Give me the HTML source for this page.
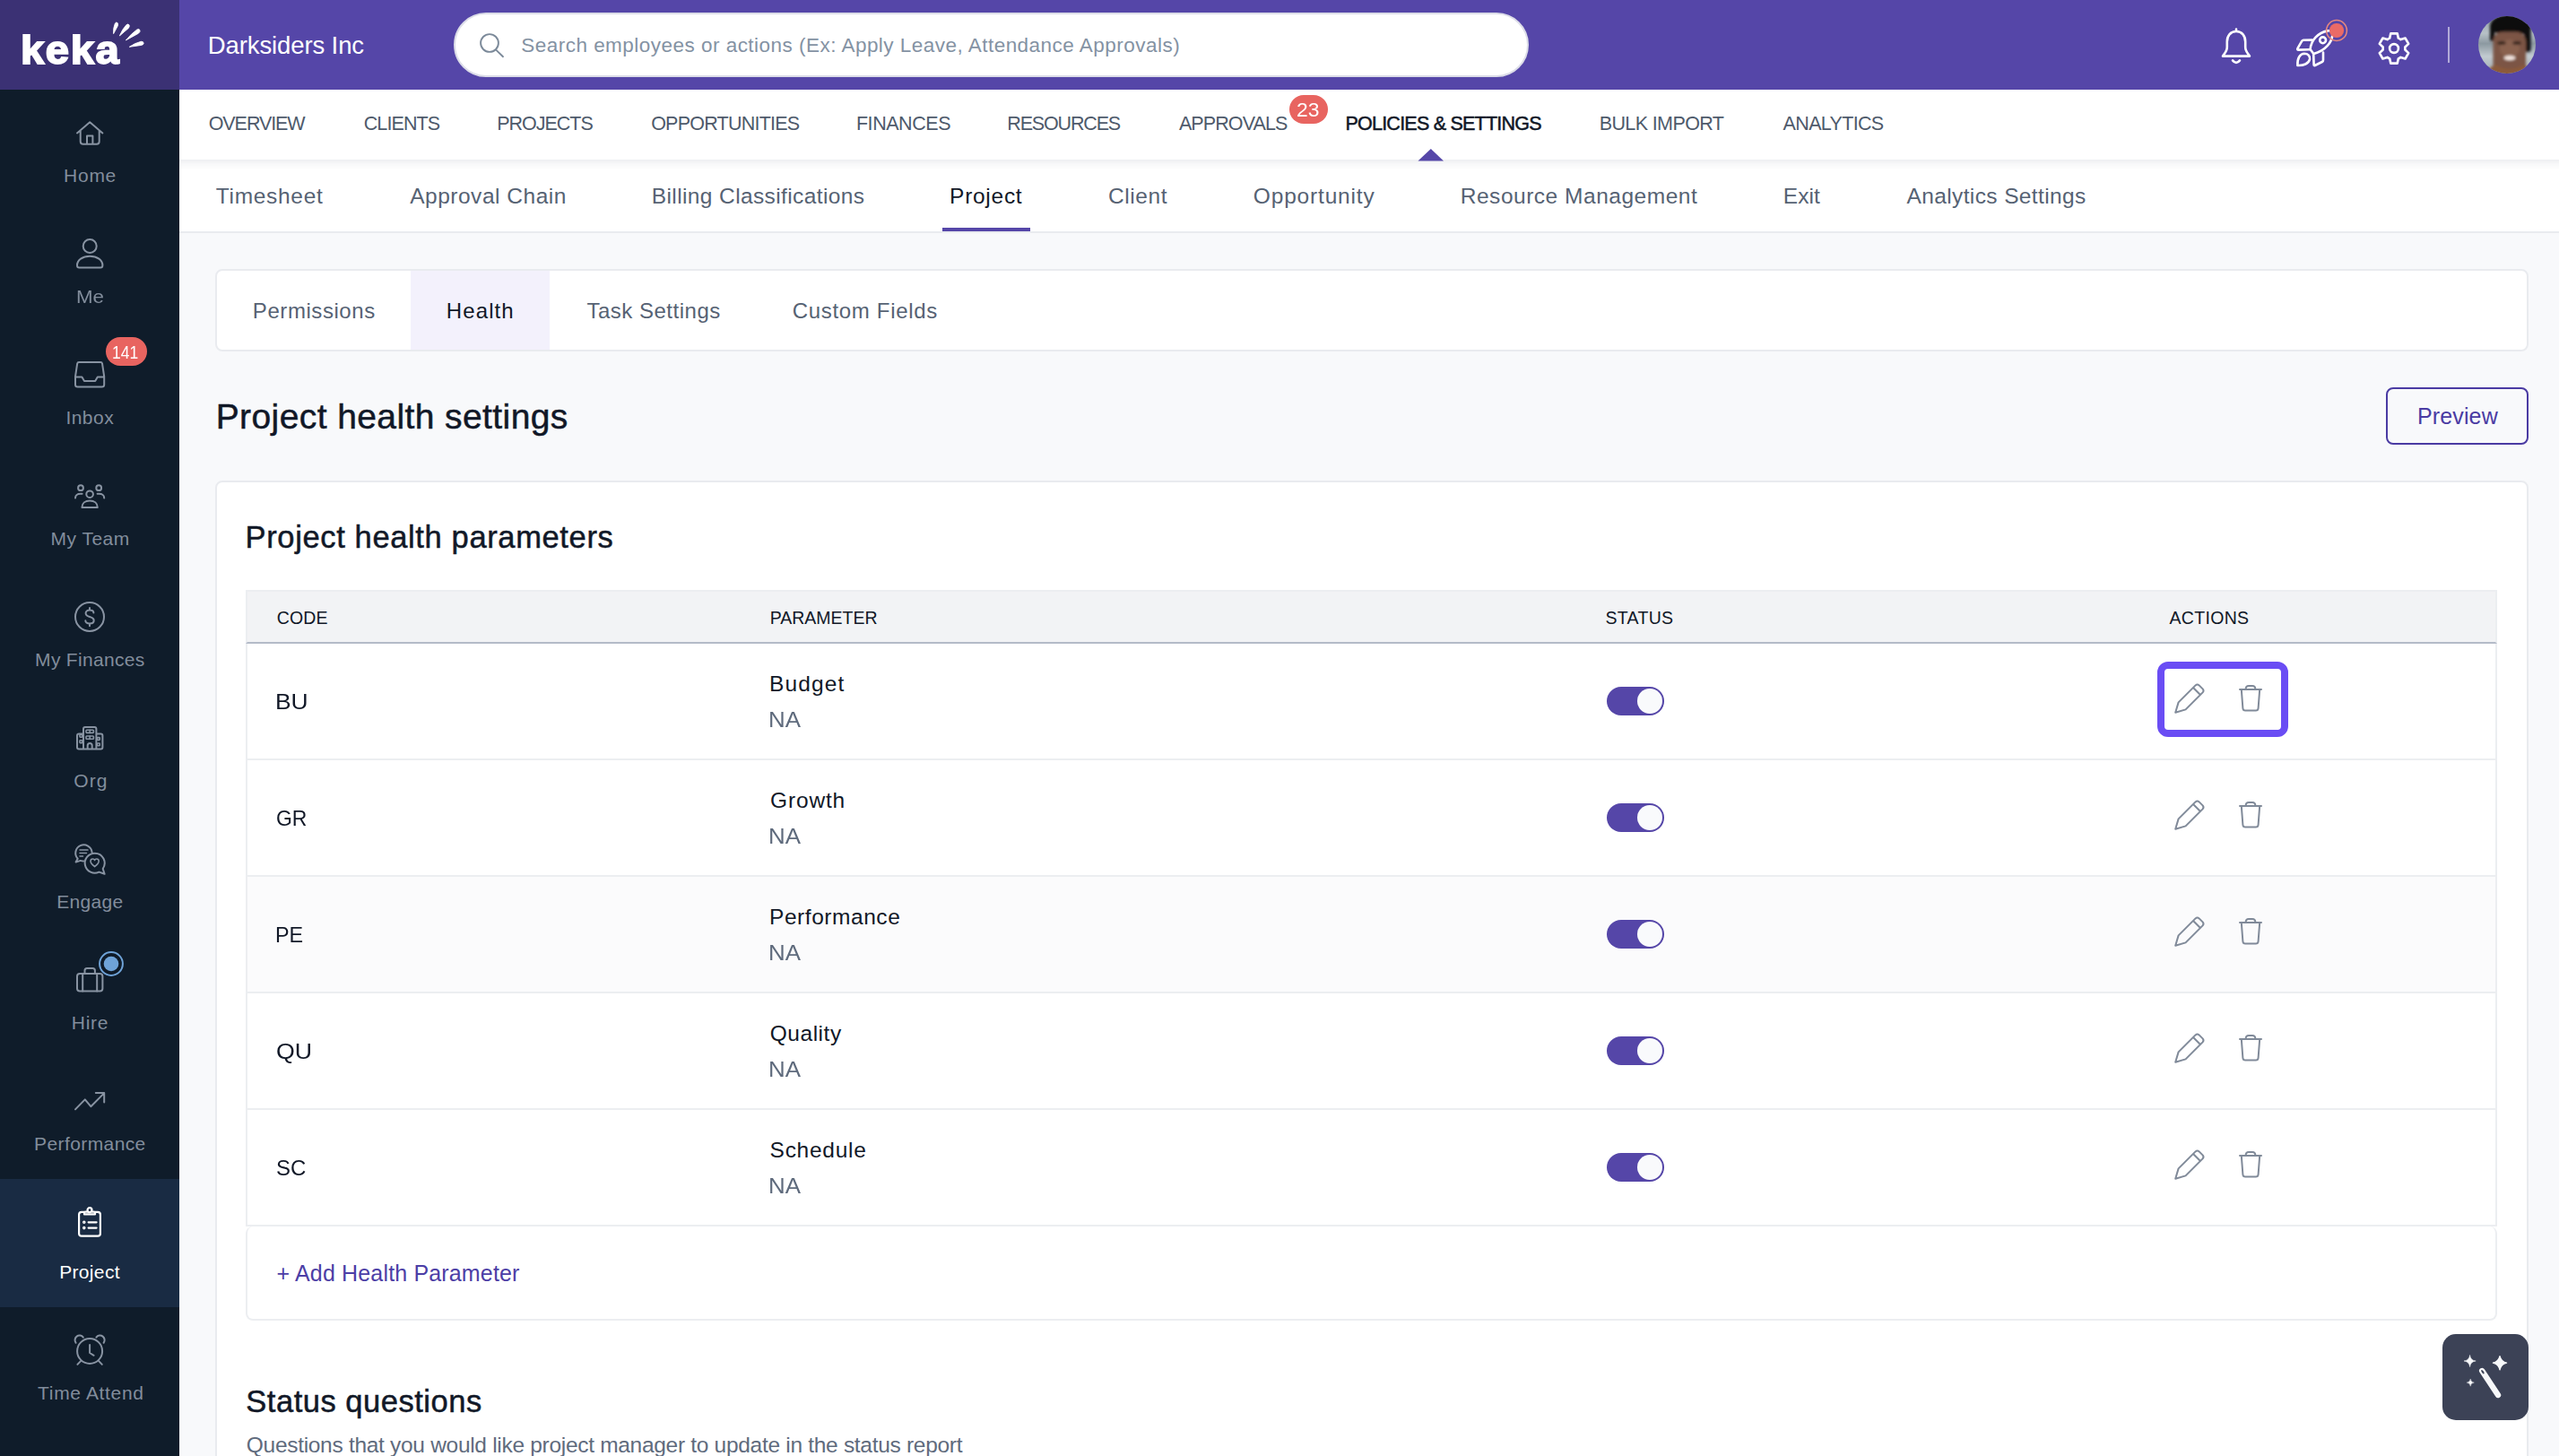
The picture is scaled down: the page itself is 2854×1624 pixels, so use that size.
<!DOCTYPE html>
<html lang="en">
<head>
<meta charset="utf-8">
<title>Keka - Project health settings</title>
<style>
*{box-sizing:border-box;margin:0;padding:0}
html,body{width:2854px;height:1624px;overflow:hidden;background:#f8f9fb;font-family:"Liberation Sans",Arial,sans-serif;color:#111827}
div,svg{position:absolute}
#txt{left:0;top:0;z-index:20}
span.t{position:absolute;white-space:nowrap;line-height:1}
#logo{left:0;top:0;width:200px;height:100px;background:#3b3174}
#topbar{left:200px;top:0;width:2654px;height:100px;background:#5546a8}
#search{left:506px;top:14px;width:1199px;height:72px;border-radius:36px;background:#fff;border:2px solid #dcdde8}
#side{left:0;top:100px;width:200px;height:1524px;background:#0f1c2a}
#sideact{left:0;top:1315px;width:200px;height:143px;background:#192b43}
svg.si{fill:none;stroke:#8893a2;stroke-width:2;stroke-linecap:round;stroke-linejoin:round;overflow:visible}
svg.tw{fill:none;stroke:#fff;stroke-width:2.6;stroke-linecap:round;stroke-linejoin:round;overflow:visible}
.badge{background:#e86460;border-radius:16px;height:32px}
#nav{left:140px;top:100px;width:2800px;height:78px;background:#fff;box-shadow:0 3px 9px rgba(40,50,80,.10);z-index:3;clip-path:inset(0 0 -30px 60px)}
#sub{left:200px;top:178px;width:2654px;height:82px;background:#fff;border-bottom:2px solid #e9ebef;z-index:2}
.card{background:#fff;border:2px solid #e9ebef;border-radius:8px}
#thead{left:274px;top:658px;width:2511px;height:60px;background:#f2f3f5;border-bottom:2px solid #b4bbc8;border-left:2px solid #eceef1;border-right:2px solid #eceef1;border-top:2px solid #eceef1}
.row{left:274px;width:2511px;height:130px;border-bottom:2px solid #eceef1;border-left:2px solid #eceef1;border-right:2px solid #eceef1;background:#fff}
.tog{left:1792px;width:64px;height:32px;border-radius:16px;background:#5546a8}
.tog i{position:absolute;right:2px;top:2px;width:28px;height:28px;border-radius:14px;background:#f9fafc}
svg.ic{fill:none;stroke:#808a99;stroke-width:2;stroke-linecap:round;stroke-linejoin:round;overflow:visible}
</style>
</head>
<body>
<!-- ===== top bar ===== -->
<div id="topbar"></div>
<div id="logo">
  <span class="t" style="left:22.8px;top:33px;font-size:45px;font-weight:bold;color:#fff;letter-spacing:1.5px;-webkit-text-stroke:1.8px #fff;paint-order:stroke fill;transform:scaleX(1.05);transform-origin:0 0">keka</span>
  <svg width="200" height="100" style="left:0;top:0" fill="#fff" stroke="#fff" stroke-width="0.9" stroke-linejoin="round">
    <path d="M126.6,37.6 Q126.2,31 128.3,26.2 Q129.6,24.2 131.1,25.6 Q131.9,27 131.2,29 Z"/>
    <path d="M133.4,39.9 Q136.5,32.5 140.9,27.8 Q142.8,26.2 144.1,27.9 Q144.7,29.6 143.3,31.4 Z"/>
    <path d="M140.4,44.9 Q146.5,37.5 152.8,33 Q155.2,31.8 156.1,33.8 Q156.4,35.8 154.4,37.2 Z"/>
    <path d="M144.3,52.3 Q151,47.8 157.4,46.3 Q159.9,46.1 160.2,48.2 Q159.9,50 157.6,50.4 Z"/>
  </svg>
</div>
<div id="search">
  <svg width="30" height="30" style="left:27px;top:20.5px" fill="none" stroke="#7b8999" stroke-width="1.9" stroke-linecap="round"><circle cx="11" cy="11" r="9.9"/><path d="M18.2,18.6 L26,26.2"/></svg>
</div>
<!-- bell -->
<svg class="tw" width="34" height="42" style="left:2477px;top:31px"><path d="M17,4 C10.5,4 6.8,9 6.8,15.5 V21.5 C6.8,26 4,28.6 2,31.6 H32 C30,28.6 27.2,26 27.2,21.5 V15.5 C27.2,9 23.5,4 17,4 Z M17,1.6 V4 M13,36.4 Q17,41.4 21,36.4"/></svg>
<!-- rocket -->
<svg class="tw" width="42" height="42" style="left:2560px;top:33px">
  <path d="M16.6,22 C17.5,12 25,3.5 36,1.4 Q41.5,0.6 41.4,6 C40.5,14 34,23.5 20.3,27 Z"/>
  <circle cx="30.6" cy="11.8" r="3.4"/>
  <path d="M18.4,11.6 L9,11.8 Q7.6,12 7,13.2 L2.4,21.2 Q1.8,22.6 3.4,22.6 L16,22.2"/>
  <path d="M31,25.6 L31,34 Q31,35.4 29.8,36 L21.8,40 Q20.6,40.4 20.6,39 L20.2,27.6"/>
  <path d="M2.4,40 C2,32 5,27 10,26.8 C14,26.8 16.6,29.6 16,33 C15,38 9,40.4 2.4,40 Z"/>
</svg>
<svg width="30" height="30" style="left:2591.1px;top:18.9px"><circle cx="15" cy="15" r="11.4" fill="none" stroke="#e8897f" stroke-width="1.5"/><circle cx="15" cy="15" r="8.1" fill="#ea6a66"/></svg>
<!-- gear -->
<svg class="tw" width="40" height="40" style="left:2650px;top:34px"><path d="M15.15,8.59 L16.32,3.40 L23.68,3.40 L24.85,8.59 A12.4,12.4 0 0 1 27.46,10.10 L32.53,8.51 L36.21,14.89 L32.31,18.49 A12.4,12.4 0 0 1 32.31,21.51 L36.21,25.11 L32.53,31.49 L27.46,29.90 A12.4,12.4 0 0 1 24.85,31.41 L23.68,36.60 L16.32,36.60 L15.15,31.41 A12.4,12.4 0 0 1 12.54,29.90 L7.47,31.49 L3.79,25.11 L7.69,21.51 A12.4,12.4 0 0 1 7.69,18.49 L3.79,14.89 L7.47,8.51 L12.54,10.10 A12.4,12.4 0 0 1 15.15,8.59 Z"/><circle cx="20" cy="20" r="4.9"/></svg>
<div style="left:2730px;top:30px;width:2px;height:40px;background:rgba(255,255,255,.55)"></div>
<!-- avatar -->
<svg width="64" height="64" viewBox="0 0 64 64" style="left:2764px;top:18px">
  <defs>
    <clipPath id="avc"><circle cx="32" cy="32" r="32"/></clipPath>
    <filter id="avb" x="-20%" y="-20%" width="140%" height="140%"><feGaussianBlur stdDeviation="1.5"/></filter>
    <linearGradient id="avg" x1="0" y1="0" x2="0" y2="1"><stop offset="0" stop-color="#97a4ac"/><stop offset=".3" stop-color="#b7c1c7"/><stop offset=".48" stop-color="#8c99a1"/><stop offset=".7" stop-color="#c2cbd0"/><stop offset="1" stop-color="#a0abb2"/></linearGradient>
  </defs>
  <g clip-path="url(#avc)">
    <rect width="64" height="64" fill="url(#avg)"/>
    <g filter="url(#avb)">
      <ellipse cx="36.5" cy="10" rx="23" ry="12.5" fill="#0c0c0f"/>
      <rect x="51" y="8" width="7.5" height="32" rx="3.5" fill="#0c0c0f"/>
      <rect x="13" y="8" width="5.5" height="20" rx="2.7" fill="#0c0c0f"/>
      <rect x="16.5" y="17.5" width="36.5" height="52" rx="11" fill="#7b5544"/>
      <ellipse cx="35" cy="36" rx="11" ry="10" fill="#8a6250"/>
      <ellipse cx="26" cy="30" rx="5" ry="1.7" fill="#2b1a14"/>
      <ellipse cx="43" cy="30" rx="5" ry="1.7" fill="#2b1a14"/>
      <ellipse cx="35" cy="46.6" rx="6.4" ry="2.7" fill="#f3e5df"/>
      <path d="M8,66 C11,57 17,54 22,55 C28,60 42,60 48,55 C53,54 58,57 60,66 Z" fill="#8b5a3a"/>
    </g>
  </g>
</svg>

<!-- ===== sidebar ===== -->
<div id="side"></div>
<div id="sideact"></div>
<!-- home -->
<svg class="si" width="31" height="27" style="left:84.9px;top:134.7px"><path d="M1,13.4 L15.2,1.2 L29.4,13.4 M4.7,10.8 V22.8 Q4.7,25.8 7.7,25.8 H22.7 Q25.7,25.8 25.7,22.8 V10.8 M12,25.8 V16.4 H18.4 V25.8"/></svg>
<!-- me -->
<svg class="si" width="31" height="34" style="left:84.9px;top:266.3px"><circle cx="15.2" cy="8.5" r="7.5"/><path d="M1,30 C1,24 7,19.8 15.2,19.8 C23.4,19.8 29.4,24 29.4,30 Q29.4,32.5 27,32.5 H3.4 Q1,32.5 1,30 Z"/></svg>
<!-- inbox -->
<svg class="si" width="35" height="30" style="left:82.9px;top:403.4px"><path d="M5,1 H29.2 Q30.7,1 31,2.4 L33.2,17 V26 Q33.2,28.6 30.6,28.6 H3.6 Q1,28.6 1,26 V17 L3.2,2.4 Q3.5,1 5,1 Z M1,17.6 H8.4 L11,22 H23.2 L25.8,17.6 H33.2"/></svg>
<div class="badge" style="left:118px;top:376px;width:46px"></div>
<!-- my team -->
<svg class="si" width="35" height="27" style="left:82.9px;top:539.6px"><circle cx="17.1" cy="11.2" r="3.8"/><path d="M8.4,26 C8.4,21.5 12,18.6 17.1,18.6 C22.2,18.6 25.8,21.5 25.8,26 Z"/><circle cx="7" cy="4.2" r="2.9"/><circle cx="27.2" cy="4.2" r="2.9"/><path d="M1,15.5 C1,12.5 3.5,10.8 6.5,10.8 H8.6 M33.2,15.5 C33.2,12.5 30.7,10.8 27.7,10.8 H25.6"/></svg>
<!-- finances -->
<svg class="si" width="34" height="34" style="left:83px;top:671px"><circle cx="17" cy="17" r="16"/><path d="M21.4,12.6 C21.4,10.6 19.5,9.6 17,9.6 C14.3,9.6 12.6,10.9 12.6,13 C12.6,15.4 14.6,16.3 17,17 C19.5,17.7 21.7,18.6 21.7,21 C21.7,23.3 19.8,24.5 17,24.5 C14.2,24.5 12.3,23.3 12.3,21.2 M17,7 V9.6 M17,24.5 V27.2"/></svg>
<!-- org -->
<svg class="si" width="31" height="27" style="left:84.9px;top:809.6px"><path d="M8,25.4 V3 Q8,1 10,1 H20.4 Q22.4,1 22.4,3 V25.4 M8,8.5 H3 Q1,8.5 1,10.5 V23.4 Q1,25.4 3,25.4 H27.4 Q29.4,25.4 29.4,23.4 V10.5 Q29.4,8.5 27.4,8.5 H22.4 M12.7,25.4 V21.5 Q12.7,19 15.2,19 Q17.7,19 17.7,21.5 V25.4"/><g stroke-width="1.6"><rect x="11" y="4.2" width="8.4" height="3.2" rx=".8"/><rect x="11" y="11" width="8.4" height="3.2" rx=".8"/><path d="M15.2,4.2 V7.4 M15.2,11 V14.2"/><rect x="4" y="9.4" width="2.8" height="2.8" rx=".6"/><rect x="4" y="15.8" width="2.8" height="2.8" rx=".6"/><rect x="23.4" y="12.6" width="2.8" height="2.8" rx=".6"/><rect x="23.4" y="19" width="2.8" height="2.8" rx=".6"/></g></svg>
<!-- engage -->
<svg class="si" width="36" height="35" style="left:82.5px;top:940.6px"><path d="M19.6,9.6 A9.2,9.2 0 1,0 3.7,16.8 L1.6,20.6 L6.8,18.9 Q8.4,19.5 10.2,19.5"/><path d="M6,7 H15 M6,10.5 H13.5 M6,14 H9.5" stroke-width="1.5"/><path d="M22.6,10.7 A11,11 0 1,0 27.5,31.6 L33.6,33.8 L31.7,28 A11,11 0 0,0 22.6,10.7 Z"/><path stroke-width="1.6" d="M22.6,25.6 C19,23 18,21 18,19.6 C18,18 19.3,17 20.5,17 C21.5,17 22.3,17.6 22.6,18.4 C22.9,17.6 23.7,17 24.7,17 C25.9,17 27.2,18 27.2,19.6 C27.2,21 26.2,23 22.6,25.6 Z"/></svg>
<!-- hire -->
<svg class="si" width="31" height="28" style="left:84.9px;top:1079px"><rect x="1" y="7" width="28.4" height="19.5" rx="3"/><path d="M9.5,7 V3.5 Q9.5,1 12,1 H18.4 Q20.9,1 20.9,3.5 V7 M7.2,7 V26.5 M23.2,7 V26.5"/></svg>
<svg width="30" height="30" style="left:108.8px;top:1059.6px"><circle cx="15" cy="15" r="12.9" fill="#0f1b29" stroke="#6fa3d8" stroke-width="2"/><circle cx="15" cy="15" r="8.3" fill="#6fa3d8"/></svg>
<!-- performance -->
<svg class="si" width="35" height="21" style="left:82.9px;top:1218px"><path d="M1,19.4 L11.8,8.4 L18.3,16.2 L32.8,1.6 M23.8,1.1 H33.2 V11.6"/></svg>
<!-- project -->
<svg class="si" width="26" height="34" style="left:87.1px;top:1346px;stroke:#fff;stroke-width:2.2"><path d="M6.5,5.8 H4 Q1.1,5.8 1.1,8.8 V29.7 Q1.1,32.7 4,32.7 H22 Q24.9,32.7 24.9,29.7 V8.8 Q24.9,5.8 22,5.8 H19.5 M7,8.4 H19 M7,8.4 V6.6 Q7,5.6 8,5.6 H10.3 M19,8.4 V6.6 Q19,5.6 18,5.6 H15.7"/><circle cx="13" cy="3.7" r="2.5"/><path d="M11.6,17.3 H20.6 M11.6,23.6 H20.6"/><circle cx="6.8" cy="17.3" r=".7"/><circle cx="6.8" cy="23.6" r=".7"/></svg>
<!-- time attend -->
<svg class="si" width="35" height="34" style="left:83px;top:1489px"><circle cx="17.1" cy="18" r="14"/><path d="M17.1,11 V20 L21.6,22.8 M1.6,8.8 A4.8,4.8 0 0 1 9.8,2.6 M24.4,2.6 A4.8,4.8 0 0 1 32.6,8.8 M7.5,28.6 L3.4,32.9 M26.7,28.6 L30.8,32.9"/></svg>

<!-- ===== nav bars ===== -->
<div id="nav"></div>
<div class="badge" style="left:1438px;top:106px;width:43px;z-index:4"></div>
<svg width="30" height="15" style="left:1581px;top:165px;z-index:5"><path d="M0.5,14.5 L14.8,1 L29,14.5 Z" fill="#5546a8"/></svg>
<div id="sub"></div>
<div style="left:1051px;top:254px;width:98px;height:4px;background:#5546a8;z-index:6"></div>

<!-- ===== content ===== -->
<div class="card" id="tabs" style="left:240px;top:300px;width:2580px;height:92px;overflow:hidden"><div style="left:216px;top:0;width:155px;height:88px;background:#f3f1fc"></div></div>
<div style="left:2661px;top:432px;width:159px;height:64px;border:2px solid #4a3ba3;border-radius:8px"></div>
<div class="card" style="left:240px;top:536px;width:2580px;height:1200px"></div>
<div id="thead"></div>
<div class="row" style="top:718px"></div>
<div class="row" style="top:848px"></div>
<div class="row" style="top:978px;background:#fbfbfc"></div>
<div class="row" style="top:1108px"></div>
<div class="row" style="top:1238px"></div>
<div style="left:274px;top:1368px;width:2511px;height:105px;border:2px solid #eceef1;border-top:none;border-radius:8px;background:#fff"></div>
<div style="left:2406px;top:738px;width:146px;height:84px;border:8px solid #6a4df4;border-radius:12px"></div>
<div class="tog" style="top:766px"><i></i></div>
<svg class="ic" width="34" height="34" style="left:2425px;top:762px"><path d="M1.2,32.8 L4.6,21.4 L23.6,2.4 Q25.6,0.6 27.6,2.4 L31.6,6.4 Q33.4,8.4 31.6,10.4 L12.6,29.4 Z M21,5 L29,13"/></svg>
<svg class="ic" width="26" height="30" style="left:2497px;top:764.2px"><path d="M1,5 H25 M7.6,5 Q7.6,1 11,1 H15 Q18.4,1 18.4,5 M2.8,5 L4.4,26 Q4.6,28.6 7.2,28.6 H18.8 Q21.4,28.6 21.6,26 L23.2,5"/></svg>
<div class="tog" style="top:896px"><i></i></div>
<svg class="ic" width="34" height="34" style="left:2425px;top:892px"><path d="M1.2,32.8 L4.6,21.4 L23.6,2.4 Q25.6,0.6 27.6,2.4 L31.6,6.4 Q33.4,8.4 31.6,10.4 L12.6,29.4 Z M21,5 L29,13"/></svg>
<svg class="ic" width="26" height="30" style="left:2497px;top:894.2px"><path d="M1,5 H25 M7.6,5 Q7.6,1 11,1 H15 Q18.4,1 18.4,5 M2.8,5 L4.4,26 Q4.6,28.6 7.2,28.6 H18.8 Q21.4,28.6 21.6,26 L23.2,5"/></svg>
<div class="tog" style="top:1026px"><i></i></div>
<svg class="ic" width="34" height="34" style="left:2425px;top:1022px"><path d="M1.2,32.8 L4.6,21.4 L23.6,2.4 Q25.6,0.6 27.6,2.4 L31.6,6.4 Q33.4,8.4 31.6,10.4 L12.6,29.4 Z M21,5 L29,13"/></svg>
<svg class="ic" width="26" height="30" style="left:2497px;top:1024.2px"><path d="M1,5 H25 M7.6,5 Q7.6,1 11,1 H15 Q18.4,1 18.4,5 M2.8,5 L4.4,26 Q4.6,28.6 7.2,28.6 H18.8 Q21.4,28.6 21.6,26 L23.2,5"/></svg>
<div class="tog" style="top:1156px"><i></i></div>
<svg class="ic" width="34" height="34" style="left:2425px;top:1152px"><path d="M1.2,32.8 L4.6,21.4 L23.6,2.4 Q25.6,0.6 27.6,2.4 L31.6,6.4 Q33.4,8.4 31.6,10.4 L12.6,29.4 Z M21,5 L29,13"/></svg>
<svg class="ic" width="26" height="30" style="left:2497px;top:1154.2px"><path d="M1,5 H25 M7.6,5 Q7.6,1 11,1 H15 Q18.4,1 18.4,5 M2.8,5 L4.4,26 Q4.6,28.6 7.2,28.6 H18.8 Q21.4,28.6 21.6,26 L23.2,5"/></svg>
<div class="tog" style="top:1286px"><i></i></div>
<svg class="ic" width="34" height="34" style="left:2425px;top:1282px"><path d="M1.2,32.8 L4.6,21.4 L23.6,2.4 Q25.6,0.6 27.6,2.4 L31.6,6.4 Q33.4,8.4 31.6,10.4 L12.6,29.4 Z M21,5 L29,13"/></svg>
<svg class="ic" width="26" height="30" style="left:2497px;top:1284.2px"><path d="M1,5 H25 M7.6,5 Q7.6,1 11,1 H15 Q18.4,1 18.4,5 M2.8,5 L4.4,26 Q4.6,28.6 7.2,28.6 H18.8 Q21.4,28.6 21.6,26 L23.2,5"/></svg>
<div style="left:2724px;top:1488px;width:96px;height:96px;border-radius:15px;background:#3c4256;z-index:30">
<svg width="96" height="96" style="left:0;top:0" fill="#f7f8fa">
<path d="M44.2,41 L62,68" stroke="#f7f8fa" stroke-width="6.4" stroke-linecap="round"/>
<ellipse cx="44.9" cy="42.2" rx="1.1" ry="2.6" transform="rotate(-33 44.9 42.2)" fill="#3c4256"/>
<path d="M30.6,23.4 Q31.3,29.3 37.2,30 Q31.3,30.7 30.6,36.6 Q29.900000000000002,30.7 24.0,30 Q29.900000000000002,29.3 30.6,23.4 Z" stroke="#f7f8fa" stroke-width="0.5"/>
<path d="M64,24.6 Q65.5,30.700000000000003 71.6,32.2 Q65.5,33.7 64,39.800000000000004 Q62.5,33.7 56.4,32.2 Q62.5,30.700000000000003 64,24.6 Z" stroke="#f7f8fa" stroke-width="1.3" stroke-linejoin="round"/>
<path d="M31.2,50.0 Q31.599999999999998,53.7 35.3,54.1 Q31.599999999999998,54.5 31.2,58.2 Q30.8,54.5 27.1,54.1 Q30.8,53.7 31.2,50.0 Z" stroke="#f7f8fa" stroke-width="0.4"/>
</svg></div>

<!-- text layer -->
<div id="txt">
<span class="t" style="left:231.78px;top:37px;font-size:27.5px;color:#ffffff;letter-spacing:-0.110px;">Darksiders Inc</span>
<span class="t" style="left:581.26px;top:40px;font-size:22.5px;color:#8492a3;letter-spacing:0.477px;">Search employees or actions (Ex: Apply Leave, Attendance Approvals)</span>
<span class="t" style="left:232.71px;top:128px;font-size:21.5px;color:#4e5a6b;letter-spacing:-1.077px;">OVERVIEW</span>
<span class="t" style="left:405.69px;top:128px;font-size:21.5px;color:#4e5a6b;letter-spacing:-0.882px;">CLIENTS</span>
<span class="t" style="left:554.27px;top:128px;font-size:21.5px;color:#4e5a6b;letter-spacing:-1.024px;">PROJECTS</span>
<span class="t" style="left:726.13px;top:128px;font-size:21.5px;color:#4e5a6b;letter-spacing:-0.762px;">OPPORTUNITIES</span>
<span class="t" style="left:954.94px;top:128px;font-size:21.5px;color:#4e5a6b;letter-spacing:-0.450px;">FINANCES</span>
<span class="t" style="left:1123.33px;top:128px;font-size:21.5px;color:#4e5a6b;letter-spacing:-1.167px;">RESOURCES</span>
<span class="t" style="left:1314.95px;top:128px;font-size:21.5px;color:#4e5a6b;letter-spacing:-0.908px;">APPROVALS</span>
<span class="t" style="left:1783.68px;top:128px;font-size:21.5px;color:#4e5a6b;letter-spacing:-0.612px;">BULK IMPORT</span>
<span class="t" style="left:1988.59px;top:128px;font-size:21.5px;color:#4e5a6b;letter-spacing:-0.660px;">ANALYTICS</span>
<span class="t" style="left:1500.46px;top:128px;font-size:21.5px;color:#111827;letter-spacing:-0.769px;-webkit-text-stroke:0.5px #111827;">POLICIES &amp; SETTINGS</span>
<span class="t" style="transform:scaleX(1.0628);transform-origin:0 0;left:1445.84px;top:113px;font-size:21.5px;color:#ffffff;letter-spacing:0.000px;">23</span>
<span class="t" style="left:240.85px;top:207px;font-size:24.5px;color:#566273;letter-spacing:0.683px;">Timesheet</span>
<span class="t" style="left:457.17px;top:207px;font-size:24.5px;color:#566273;letter-spacing:0.518px;">Approval Chain</span>
<span class="t" style="left:726.78px;top:207px;font-size:24.5px;color:#566273;letter-spacing:0.389px;">Billing Classifications</span>
<span class="t" style="left:1236.11px;top:207px;font-size:24.5px;color:#566273;letter-spacing:0.540px;">Client</span>
<span class="t" style="left:1397.82px;top:207px;font-size:24.5px;color:#566273;letter-spacing:0.826px;">Opportunity</span>
<span class="t" style="left:1628.78px;top:207px;font-size:24.5px;color:#566273;letter-spacing:0.517px;">Resource Management</span>
<span class="t" style="left:1988.78px;top:207px;font-size:24.5px;color:#566273;letter-spacing:0.045px;">Exit</span>
<span class="t" style="left:2126.42px;top:207px;font-size:24.5px;color:#566273;letter-spacing:0.388px;">Analytics Settings</span>
<span class="t" style="left:1059.07px;top:207px;font-size:24.5px;color:#111827;letter-spacing:0.726px;">Project</span>
<span class="t" style="left:281.87px;top:335px;font-size:24px;color:#566273;letter-spacing:0.559px;">Permissions</span>
<span class="t" style="left:497.79px;top:335px;font-size:24px;color:#111827;letter-spacing:1.113px;">Health</span>
<span class="t" style="left:654.47px;top:335px;font-size:24px;color:#566273;letter-spacing:0.505px;">Task Settings</span>
<span class="t" style="left:883.78px;top:335px;font-size:24px;color:#566273;letter-spacing:0.676px;">Custom Fields</span>
<span class="t" style="left:240.67px;top:445px;font-size:39px;color:#111827;letter-spacing:0.407px;-webkit-text-stroke:0.5px #111827;">Project health settings</span>
<span class="t" style="left:2695.94px;top:452px;font-size:25px;color:#4a3ba3;letter-spacing:0.143px;">Preview</span>
<span class="t" style="left:273.58px;top:582px;font-size:34.5px;color:#111827;letter-spacing:0.631px;-webkit-text-stroke:0.5px #111827;">Project health parameters</span>
<span class="t" style="left:308.71px;top:680px;font-size:19.5px;color:#111827;letter-spacing:0.123px;">CODE</span>
<span class="t" style="left:858.71px;top:680px;font-size:19.5px;color:#111827;letter-spacing:0.001px;">PARAMETER</span>
<span class="t" style="left:1790.48px;top:680px;font-size:19.5px;color:#111827;letter-spacing:0.320px;">STATUS</span>
<span class="t" style="left:2419.41px;top:680px;font-size:19.5px;color:#111827;letter-spacing:0.340px;">ACTIONS</span>
<span class="t" style="transform:scaleX(1.0777);transform-origin:0 0;left:306.74px;top:771px;font-size:24.5px;color:#111827;letter-spacing:0.000px;">BU</span>
<span class="t" style="left:858.07px;top:751px;font-size:24.5px;color:#111827;letter-spacing:1.098px;">Budget</span>
<span class="t" style="transform:scaleX(1.0553);transform-origin:0 0;left:857.19px;top:791px;font-size:24.5px;color:#5f6b7d;letter-spacing:0.000px;">NA</span>
<span class="t" style="transform:scaleX(0.9356);transform-origin:0 0;left:307.96px;top:901px;font-size:24.5px;color:#111827;letter-spacing:0.000px;">GR</span>
<span class="t" style="left:859.11px;top:881px;font-size:24.5px;color:#111827;letter-spacing:0.814px;">Growth</span>
<span class="t" style="transform:scaleX(1.0553);transform-origin:0 0;left:857.19px;top:921px;font-size:24.5px;color:#5f6b7d;letter-spacing:0.000px;">NA</span>
<span class="t" style="transform:scaleX(0.9525);transform-origin:0 0;left:307.00px;top:1031px;font-size:24.5px;color:#111827;letter-spacing:0.000px;">PE</span>
<span class="t" style="left:858.07px;top:1011px;font-size:24.5px;color:#111827;letter-spacing:0.547px;">Performance</span>
<span class="t" style="transform:scaleX(1.0553);transform-origin:0 0;left:857.19px;top:1051px;font-size:24.5px;color:#5f6b7d;letter-spacing:0.000px;">NA</span>
<span class="t" style="transform:scaleX(1.0894);transform-origin:0 0;left:307.81px;top:1161px;font-size:24.5px;color:#111827;letter-spacing:0.000px;">QU</span>
<span class="t" style="left:858.78px;top:1141px;font-size:24.5px;color:#111827;letter-spacing:0.518px;">Quality</span>
<span class="t" style="transform:scaleX(1.0553);transform-origin:0 0;left:857.19px;top:1181px;font-size:24.5px;color:#5f6b7d;letter-spacing:0.000px;">NA</span>
<span class="t" style="transform:scaleX(0.9771);transform-origin:0 0;left:307.92px;top:1291px;font-size:24.5px;color:#111827;letter-spacing:0.000px;">SC</span>
<span class="t" style="left:858.58px;top:1271px;font-size:24.5px;color:#111827;letter-spacing:0.721px;">Schedule</span>
<span class="t" style="transform:scaleX(1.0553);transform-origin:0 0;left:857.19px;top:1311px;font-size:24.5px;color:#5f6b7d;letter-spacing:0.000px;">NA</span>
<span class="t" style="left:308.54px;top:1408px;font-size:25px;color:#4c3ea6;letter-spacing:0.159px;">+ Add Health Parameter</span>
<span class="t" style="left:274.31px;top:1546px;font-size:34.5px;color:#111827;letter-spacing:0.517px;-webkit-text-stroke:0.5px #111827;">Status questions</span>
<span class="t" style="left:274.81px;top:1600px;font-size:24.5px;color:#5f6b7d;letter-spacing:-0.301px;">Questions that you would like project manager to update in the status report</span>
<span class="t" style="left:71.11px;top:185px;font-size:21px;color:#828d9c;letter-spacing:0.724px;">Home</span>
<span class="t" style="transform:scaleX(1.0621);transform-origin:0 0;left:84.64px;top:320px;font-size:21px;color:#828d9c;letter-spacing:0.000px;">Me</span>
<span class="t" style="left:73.41px;top:455px;font-size:21px;color:#828d9c;letter-spacing:0.465px;">Inbox</span>
<span class="t" style="left:56.51px;top:590px;font-size:21px;color:#828d9c;letter-spacing:0.487px;">My Team</span>
<span class="t" style="left:39.11px;top:725px;font-size:21px;color:#828d9c;letter-spacing:0.304px;">My Finances</span>
<span class="t" style="left:82.27px;top:860px;font-size:21px;color:#828d9c;letter-spacing:1.029px;">Org</span>
<span class="t" style="left:63.30px;top:995px;font-size:21px;color:#828d9c;letter-spacing:0.291px;">Engage</span>
<span class="t" style="left:79.85px;top:1130px;font-size:21px;color:#828d9c;letter-spacing:0.721px;">Hire</span>
<span class="t" style="left:38.11px;top:1265px;font-size:21px;color:#828d9c;letter-spacing:0.397px;">Performance</span>
<span class="t" style="left:66.15px;top:1408px;font-size:21px;color:#ffffff;letter-spacing:0.347px;">Project</span>
<span class="t" style="left:42.10px;top:1543px;font-size:21px;color:#828d9c;letter-spacing:0.660px;">Time Attend</span>
<span class="t" style="transform:scaleX(0.8745);transform-origin:0 0;left:125.43px;top:383px;font-size:20px;color:#ffffff;letter-spacing:0.000px;">141</span>
</div>
</body>
</html>
